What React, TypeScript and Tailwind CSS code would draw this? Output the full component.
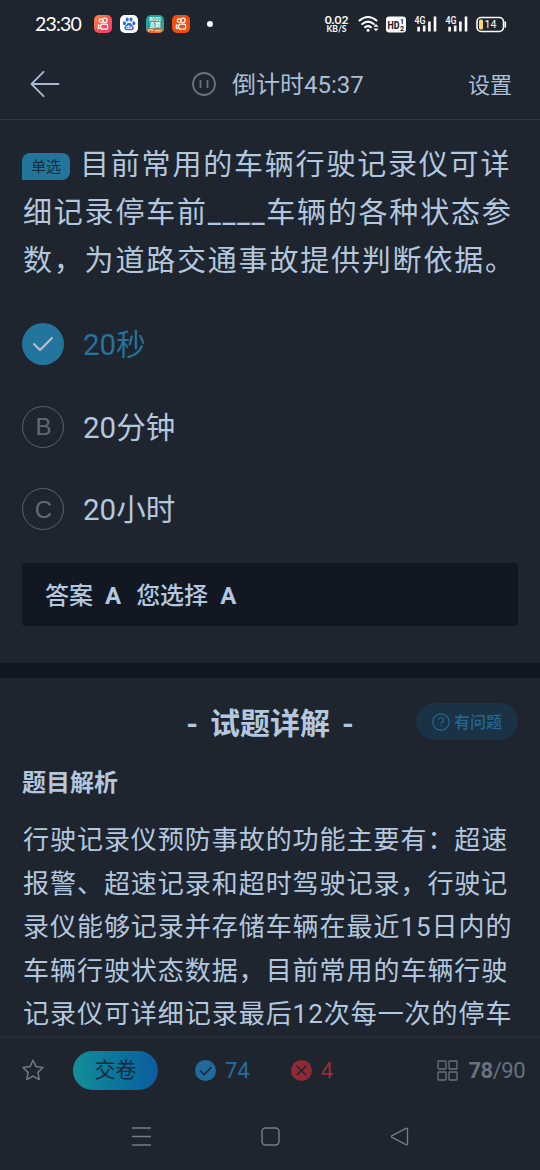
import type { ReactNode } from "react";

const options = [
  { key: "A", label: "20秒", checked: true },
  { key: "B", label: "20分钟", checked: false },
  { key: "C", label: "20小时", checked: false },
];

const explanation = [
  "行驶记录仪预防事故的功能主要有：超速",
  "报警、超速记录和超时驾驶记录，行驶记",
  "录仪能够记录并存储车辆在最近15日内的",
  "车辆行驶状态数据，目前常用的车辆行驶",
  "记录仪可详细记录最后12次每一次的停车",
];

function AppBadge({ className, children }: { className: string; children: ReactNode }) {
  return (
    <span className={`block h-[18px] w-[18px] overflow-hidden rounded-[5px] ${className}`}>
      <svg width="18" height="18" viewBox="0 0 18 18">
        {children}
      </svg>
    </span>
  );
}

function CameraGlyph() {
  return (
    <g fill="none" stroke="#fff" strokeWidth="1.2">
      <circle cx="7" cy="5.6" r="1.8" />
      <circle cx="11" cy="5.3" r="2.2" />
      <rect x="6.8" y="9.2" width="6.8" height="5" rx="1.4" />
      <path d="M6.6 11 4.3 9.8v3.900l2.300-1.200" strokeLinejoin="round" />
    </g>
  );
}

function Signal() {
  return (
    <svg width="24" height="18" viewBox="0 0 24 18">
      <text x="0.5" y="8.5" fontSize="10" fontWeight="500" fill="#fff" fontFamily="Roboto, sans-serif" textLength="11" lengthAdjust="spacingAndGlyphs">
        4G
      </text>
      <path d="M4.6 11.8v4.6M10.2 10.6v5.8M15.4 6.4v10M21 1.4v15" stroke="#fff" strokeWidth="2.6" />
    </svg>
  );
}

function StatusBar() {
  return (
    <div className="flex h-12 shrink-0 items-center justify-between pr-[33px] pl-[35px] text-white">
      <div className="flex items-center">
        <span className="w-[59px] font-['Lato'] text-[19.5px] tracking-[-0.8px]">23:30</span>
        <div className="flex items-center gap-2">
          <AppBadge className="bg-gradient-to-br from-[#fb8b3c] via-[#f8514f] to-[#f03c78]">
            <CameraGlyph />
          </AppBadge>
          <AppBadge className="bg-white">
            <g fill="#2f6be0">
              <ellipse cx="4.5" cy="8.2" rx="1.5" ry="2" />
              <ellipse cx="7.2" cy="4.6" rx="1.5" ry="2.1" />
              <ellipse cx="11" cy="4.6" rx="1.5" ry="2.1" />
              <ellipse cx="13.8" cy="8.2" rx="1.5" ry="2" />
              <path d="M9.1 7.8c2 0 2.3 1.7 3.8 3 1.8 1.6 1 4.4-1.2 4.4H6.6c-2.3 0-3-2.8-1.2-4.4C6.9 9.5 7.1 7.8 9.1 7.8Z" />
            </g>
            <text x="9.1" y="14.2" fontSize="5.5" fontWeight="700" fill="#fff" textAnchor="middle" fontFamily="Roboto, sans-serif">
              du
            </text>
          </AppBadge>
          <AppBadge className="bg-[#1fa5a0]">
            <text x="9" y="5.8" fontSize="4.5" fontWeight="700" fill="#fff" textAnchor="middle" fontFamily="Roboto, sans-serif">
              BOSS
            </text>
            <text x="9" y="11.8" fontSize="5.5" fontWeight="700" fill="#fff" textAnchor="middle" fontFamily="Noto Sans CJK SC, sans-serif">
              直聘
            </text>
            <path d="M0 13.5h18V18H0z" fill="#ee6a31" />
            <path d="M2 16.5q2.5-3.5 5-1M9 15.7h6" stroke="#ffd9b8" strokeWidth="1.1" fill="none" />
          </AppBadge>
          <AppBadge className="bg-[#f04d12]">
            <CameraGlyph />
          </AppBadge>
        </div>
        <span className="ml-[17px] h-1.5 w-1.5 rounded-full bg-white" />
      </div>

      <div className="flex items-center">
        <div className="mr-[8px] flex w-[27px] flex-col items-center font-['Lato'] font-bold">
          <span className="text-[12px] leading-[11px]">0.02</span>
          <span className="text-[8.5px] leading-[9px]">KB/S</span>
        </div>
        <svg width="22" height="18" viewBox="0 0 22 18" className="mr-[6px]">
          <g fill="none" stroke="#fff" strokeWidth="2" strokeLinecap="round">
            <path d="M1.5 5.5q8.5-7 17 0" />
            <path d="M4.2 9q5.8-4.8 11.6 0" />
            <path d="M7 12.3q3-2.4 6 0" />
          </g>
          <circle cx="10" cy="15.2" r="1.5" fill="#fff" />
          <path d="M15.5 11.8 18 9l2.5 2.800zM15.500 13.500h5L18 16.300z" fill="#fff" />
        </svg>
        <svg width="20" height="17" viewBox="0 0 20 17" className="mr-[8px]">
          <rect x="0" y="0.5" width="20" height="16" rx="3" fill="#fff" />
          <text x="1.5" y="12.6" fontSize="11" fontWeight="800" fill="#1e252f" fontFamily="Roboto, sans-serif" textLength="12" lengthAdjust="spacingAndGlyphs">
            HD
          </text>
          <text x="14" y="8" fontSize="7" fontWeight="800" fill="#1e252f" fontFamily="Roboto, sans-serif">
            1
          </text>
          <text x="14" y="14.8" fontSize="7" fontWeight="800" fill="#1e252f" fontFamily="Roboto, sans-serif">
            2
          </text>
        </svg>
        <div className="mr-[7px] flex gap-[7px]">
          <Signal />
          <Signal />
        </div>
        <svg width="31" height="17" viewBox="0 0 31 17">
          <rect x="1" y="1.5" width="26.5" height="14" rx="4.2" fill="none" stroke="#fff" strokeWidth="1.6" />
          <path d="M29.3 6v5" stroke="#fff" strokeWidth="1.6" strokeLinecap="round" />
          <rect x="3" y="3.5" width="4" height="10" rx="1.5" fill="#ffd770" />
          <text x="14.5" y="12.4" fontSize="10.5" fill="#fff" textAnchor="middle" fontFamily="Roboto, sans-serif">
            14
          </text>
        </svg>
      </div>
    </div>
  );
}

function Header() {
  return (
    <header className="flex h-[72px] shrink-0 items-center border-b border-[#343a43] pr-[28px] pl-[30px] text-[#abbfd4]">
      <svg width="30" height="28" viewBox="0 0 30 28" fill="none" stroke="#a9bccf" strokeWidth="1.8" strokeLinecap="round" strokeLinejoin="round">
        <path d="M13.5 1.8 1.5 14 13.5 26.2M1.5 14H28.5" />
      </svg>
      <div className="ml-[132px] flex items-center">
        <svg width="24" height="24" viewBox="0 0 24 24" fill="none" stroke="#69727f" strokeWidth="1.8">
          <circle cx="12" cy="12" r="11" />
          <path d="M8.5 8v8M15.5 8v8" />
        </svg>
        <span className="ml-[16px] pt-[3px] text-[24px] leading-none">倒计时45:37</span>
      </div>
      <span className="ml-auto pt-[4px] text-[22px] leading-none">设置</span>
    </header>
  );
}

function Question() {
  return (
    <section className="px-[22px] pt-[21px]">
      <div className="pl-[1px] text-[29px] leading-[48px] tracking-[1.8px] whitespace-nowrap">
        <div className="-ml-[1px] flex items-center">
          <span className="mt-[3px] mr-[10px] flex h-[27px] w-[48px] items-center justify-center rounded-[8px] rounded-bl-none bg-[#24759c] pt-[2px] text-[15px] leading-none tracking-normal text-[#152a3a]">
            单选
          </span>
          <span>目前常用的车辆行驶记录仪可详</span>
        </div>
        <div>
          细记录停车前<span className="tracking-[1.5px]">____</span>车辆的各种状态参
        </div>
        <div>数，为道路交通事故提供判断依据。</div>
      </div>

      <div className="mt-[38px] flex flex-col gap-[40.5px]">
        {options.map((o) => (
          <div key={o.key} className="flex h-[42px] items-center gap-[18px]">
            {o.checked ? (
              <span className="flex h-[42px] w-[42px] items-center justify-center rounded-full bg-[#24759e]">
                <svg width="22" height="16" viewBox="0 0 22 16" fill="none" stroke="#b3bfc8" strokeWidth="2.2">
                  <path d="M1.5 7.5 8 14 20.5 1.5" />
                </svg>
              </span>
            ) : (
              <span className="flex h-[42px] w-[42px] items-center justify-center rounded-full border border-[#59606b] pt-[1px] pl-[1px] font-['Liberation_Sans'] text-[24px] text-[#626975]">
                {o.key}
              </span>
            )}
            <span className={`pt-[4px] pl-[1px] text-[29.5px] leading-none ${o.checked ? "text-[#26739a]" : ""}`}>
              {o.label}
            </span>
          </div>
        ))}
      </div>

      <div className="mt-[33px] flex h-[63px] items-center rounded-[3px] bg-[#111822] pt-[2px] pl-[23px] text-[24px] font-medium">
        <span>答案</span>
        <span className="ml-[12px] font-bold">A</span>
        <span className="ml-[15px]">您选择</span>
        <span className="ml-[12px] font-bold">A</span>
      </div>
    </section>
  );
}

function Analysis() {
  return (
    <section className="px-[22px]">
      <div className="relative flex h-[90px] items-center justify-center gap-[12px] text-[30px] font-bold">
        <span>-</span>
        <span>试题详解</span>
        <span>-</span>
        <button className="absolute top-[25px] right-0 flex h-[37px] w-[102px] items-center justify-center gap-[4px] rounded-full bg-[#1b3246] text-[16px] font-medium text-[#22698f]">
          <svg width="18" height="18" viewBox="0 0 18 18" fill="none" stroke="#22698f" strokeWidth="1.2">
            <circle cx="9" cy="9" r="8.2" />
            <path d="M6.5 7a2.5 2.5 0 1 1 3.7 2.2c-.8.5-1.2.8-1.2 1.8M9 12.3v1.3" />
          </svg>
          <span className="pt-[2px]">有问题</span>
        </button>
      </div>
      <h3 className="flex h-[30px] items-center text-[24px] font-bold">题目解析</h3>
      <div className="mt-[21px] pl-[1px] text-[26px] leading-[43.6px] tracking-[0.96px] whitespace-nowrap">
        {explanation.map((line) => (
          <div key={line}>{line}</div>
        ))}
      </div>
    </section>
  );
}

function BottomBar() {
  return (
    <footer className="flex h-[68px] shrink-0 items-center border-t-2 border-[#252c36] pr-[15px] pb-[2px] pl-[22px] text-[22px]">
      <svg width="22" height="22" viewBox="0 0 22 22" fill="none" stroke="#727985" strokeWidth="1.5" strokeLinejoin="round">
        <path d="M11 1.2 14 7.6 21 8.5 15.9 13.4 17.2 20.6 11 17.2 4.8 20.6 6.1 13.4 1 8.5 8 7.6Z" />
      </svg>
      <button className="ml-[29px] flex h-[39px] w-[85px] items-center justify-center rounded-full bg-gradient-to-r from-[#158e98] to-[#0c5c9f] pt-[2px] text-[21px] text-[#13293a]">
        交卷
      </button>
      <div className="ml-[37px] flex items-center gap-[9px] text-[#286d9d]">
        <svg width="21" height="21" viewBox="0 0 21 21">
          <circle cx="10.5" cy="10.5" r="10.5" fill="#216b9c" />
          <path d="m5 10.5 4.200 4.200 7-7.500" fill="none" stroke="#1b2634" strokeWidth="1.6" />
        </svg>
        <span>74</span>
      </div>
      <div className="ml-[41px] flex items-center gap-[9px] text-[#93303b]">
        <svg width="21" height="21" viewBox="0 0 21 21">
          <circle cx="10.5" cy="10.5" r="10.5" fill="#8f2933" />
          <path d="m5.8 5.8 9.4 9.4m0-9.4-9.4 9.4" stroke="#1e252f" strokeWidth="1.5" />
        </svg>
        <span>4</span>
      </div>
      <div className="ml-auto flex items-center gap-[10px] text-[#69717d]">
        <svg width="21" height="21" viewBox="0 0 21 21" fill="none" stroke="#69717d" strokeWidth="1.3">
          <rect x="1" y="1" width="8" height="8" rx="0.8" />
          <rect x="12" y="1" width="8" height="8" rx="0.8" />
          <rect x="1" y="12" width="8" height="8" rx="0.8" />
          <rect x="12" y="12" width="8" height="8" rx="0.8" />
        </svg>
        <span className="tracking-[-0.5px]">
          <b>78</b>/90
        </span>
      </div>
    </footer>
  );
}

function SystemNav() {
  return (
    <nav className="flex h-[66px] shrink-0 items-center justify-center gap-[110px] pb-[1px]">
      <svg width="19" height="19" viewBox="0 0 19 19" stroke="#777d87" strokeWidth="1.5">
        <path d="M0 1h19M0 9.5h19M0 18h19" />
      </svg>
      <svg width="19" height="19" viewBox="0 0 19 19" fill="none" stroke="#777d87" strokeWidth="1.4">
        <rect x="1" y="1" width="17" height="17" rx="3.5" />
      </svg>
      <svg width="19" height="19" viewBox="0 0 19 19" fill="none" stroke="#777d87" strokeWidth="1.3" strokeLinejoin="round">
        <path d="M16 1.3 2 8.6q-1.3.9 0 1.8L16 17.7q1.5.5 1.5-1V2.3q0-1.5-1.5-1Z" />
      </svg>
    </nav>
  );
}

export default function App() {
  return (
    <div className="flex h-[1170px] w-[540px] flex-col overflow-hidden bg-[#1e252f] font-['Roboto','Noto_Sans_CJK_SC',sans-serif] text-[#b3c8df]">
      <StatusBar />
      <Header />
      <main className="min-h-0 flex-1 overflow-hidden">
        <Question />
        <div className="mt-[37px] h-[15px] bg-[#111822]" />
        <Analysis />
      </main>
      <BottomBar />
      <SystemNav />
    </div>
  );
}
